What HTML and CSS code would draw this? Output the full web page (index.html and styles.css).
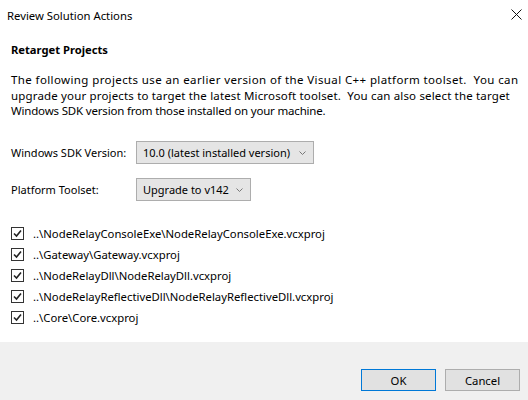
FILE: index.html
```html
<!DOCTYPE html>
<html>
<head>
<meta charset="utf-8">
<link rel="stylesheet" href="styles.css">
</head>
<body>
<div class="dialog">
  <div class="titlebar">
    <span class="title">Review Solution Actions</span>
    <svg class="close" width="11" height="11" viewBox="0 0 11 11"><path d="M0.5 0.5L10.5 10.5M10.5 0.5L0.5 10.5" stroke="#111" stroke-width="1" fill="none"/></svg>
  </div>
  <div class="main">
    <div class="heading">Retarget Projects</div>
    <div class="para">
      <div class="line line-1">The following projects use an earlier version of the Visual C++ platform toolset.&nbsp; You can</div>
      <div class="line line-2">upgrade your projects to target the latest Microsoft toolset.&nbsp; You can also select the target</div>
      <div class="line line-3">Windows SDK version from those installed on your machine.</div>
    </div>
    <div class="row row-sdk">
      <span class="label">Windows SDK Version:</span>
      <div class="combo combo-wide"><span>10.0 (latest installed version)</span><svg class="chev" width="7" height="4" viewBox="0 0 7 4"><path d="M0.5 0.5L3.5 3.5L6.5 0.5" stroke="#777" fill="none"/></svg></div>
    </div>
    <div class="row row-tool">
      <span class="label">Platform Toolset:</span>
      <div class="combo combo-narrow"><span>Upgrade to v142</span><svg class="chev" width="7" height="4" viewBox="0 0 7 4"><path d="M0.5 0.5L3.5 3.5L6.5 0.5" stroke="#777" fill="none"/></svg></div>
    </div>
    <ul class="checks">
      <li><span class="cb"><svg width="11" height="11" viewBox="0 0 11 11"><path d="M2 5.5L4.5 8L9 2.5" stroke="#222" stroke-width="1.6" fill="none"/></svg></span>..\NodeRelayConsoleExe\NodeRelayConsoleExe.vcxproj</li>
      <li><span class="cb"><svg width="11" height="11" viewBox="0 0 11 11"><path d="M2 5.5L4.5 8L9 2.5" stroke="#222" stroke-width="1.6" fill="none"/></svg></span>..\Gateway\Gateway.vcxproj</li>
      <li><span class="cb"><svg width="11" height="11" viewBox="0 0 11 11"><path d="M2 5.5L4.5 8L9 2.5" stroke="#222" stroke-width="1.6" fill="none"/></svg></span>..\NodeRelayDll\NodeRelayDll.vcxproj</li>
      <li><span class="cb"><svg width="11" height="11" viewBox="0 0 11 11"><path d="M2 5.5L4.5 8L9 2.5" stroke="#222" stroke-width="1.6" fill="none"/></svg></span>..\NodeRelayReflectiveDll\NodeRelayReflectiveDll.vcxproj</li>
      <li><span class="cb"><svg width="11" height="11" viewBox="0 0 11 11"><path d="M2 5.5L4.5 8L9 2.5" stroke="#222" stroke-width="1.6" fill="none"/></svg></span>..\Core\Core.vcxproj</li>
    </ul>
  </div>
  <div class="footer">
    <button class="btn btn-ok">OK</button>
    <button class="btn">Cancel</button>
  </div>
</div>
</body>
</html>
```
FILE: styles.css
```css
html, body {
  margin: 0;
  padding: 0;
}
body {
  width: 528px;
  height: 400px;
  background: #ffffff;
  font-family: "Noto Sans", "Open Sans", sans-serif;
  font-size: 11px;
  color: #000;
  overflow: hidden;
}
.dialog {
  display: flex;
  flex-direction: column;
  height: 400px;
}
.titlebar {
  height: 30px;
  display: flex;
  align-items: center;
  justify-content: space-between;
  padding: 0 6px 0 7px;
  flex: none;
}
.title {
  font-size: 11.3px;
  color: #000;
}
.close {
  margin-top: -2px;
}
.main {
  flex: 1;
  padding: 0 11px;
}
.heading {
  margin-top: 12px;
  font-weight: bold;
  line-height: 16px;
  font-size: 11.2px;
}
.para {
  margin-top: 14px;
  font-size: 11.5px;
}
.line {
  line-height: 15.7px;
  white-space: nowrap;
}
.line-1 {
  letter-spacing: 0.39px;
}
.line-2 {
  letter-spacing: 0.16px;
}
.line-3 {
  letter-spacing: -0.18px;
}
.row {
  display: flex;
  align-items: center;
}
.row-sdk {
  margin-top: 22px;
}
.row-tool {
  margin-top: 14px;
}
.label {
  width: 125px;
  flex: none;
}
.combo {
  height: 21px;
  border: 1px solid #adadad;
  background: #e5e5e5;
  display: flex;
  align-items: center;
  justify-content: space-between;
  padding: 0 7px 0 6px;
  box-sizing: content-box;
}
.combo-wide {
  width: 163px;
}
.combo-narrow {
  width: 100px;
}
.chev {
  flex: none;
}
.checks {
  list-style: none;
  margin: 21.5px 0 0 0;
  padding: 0;
  font-size: 11.3px;
}
.checks li {
  height: 21px;
  display: flex;
  align-items: center;
  white-space: nowrap;
}
.cb {
  width: 11px;
  height: 11px;
  border: 1px solid #333;
  background: #fff;
  margin-right: 9px;
  display: flex;
  flex: none;
}
.footer {
  height: 58px;
  flex: none;
  background: #f0f0f0;
  display: flex;
  justify-content: flex-end;
  align-items: flex-start;
  padding: 27px 8px 0 0;
  box-sizing: border-box;
  gap: 9px;
}
.btn {
  width: 75px;
  height: 22px;
  border: 1px solid #adadad;
  background: #e1e1e1;
  font-family: "Noto Sans", "Open Sans", sans-serif;
  font-size: 11.3px;
  color: #000;
  padding: 0;
  margin: 0;
}
.btn-ok {
  border-color: #0078d7;
}
```
